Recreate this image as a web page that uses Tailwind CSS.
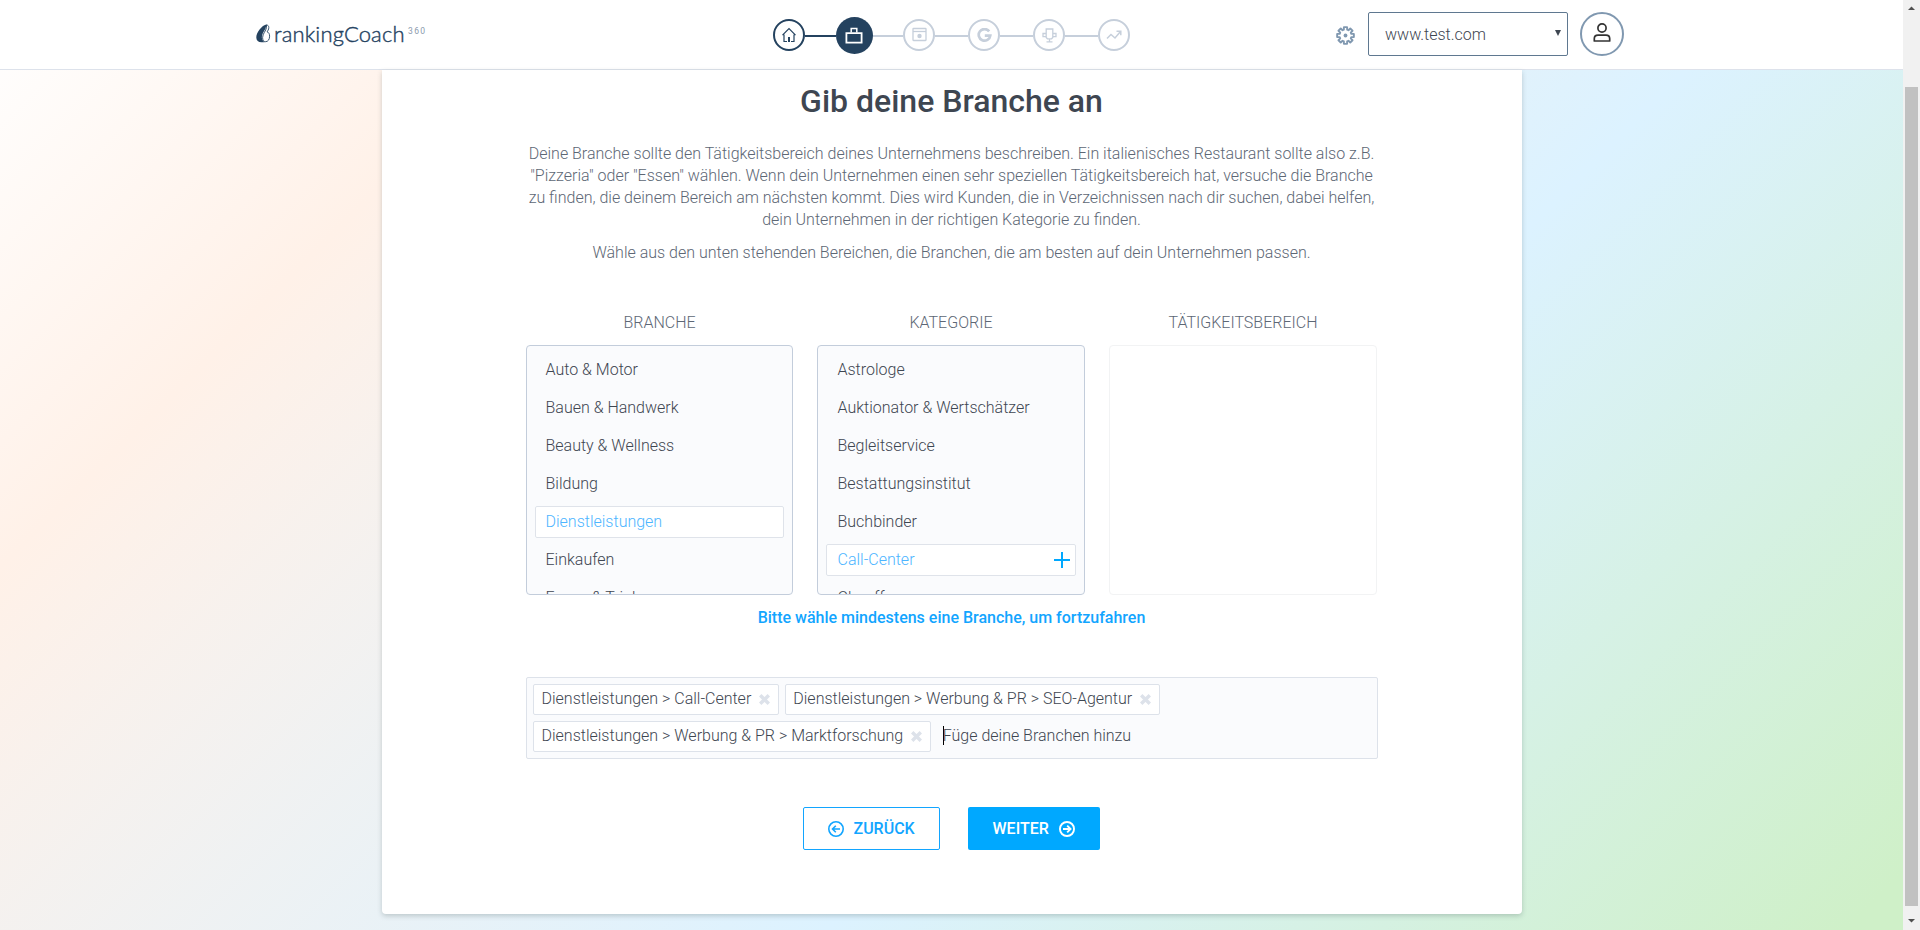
<!DOCTYPE html>
<html lang="de">
<head>
<meta charset="utf-8">
<title>rankingCoach 360</title>
<script src="https://cdn.jsdelivr.net/npm/@tailwindcss/browser@4"></script>
</head>
<body class="flex h-[930px] w-[1920px] overflow-hidden bg-white font-['Roboto',sans-serif] font-light text-[#3e4651]">
<div class="relative flex h-[930px] w-[1903px] flex-col bg-[linear-gradient(135deg,#ffffff_0%,#fff1e8_20%,#dcf2ff_62%,#cff0c8_98%)]">

  <header class="flex h-[70px] shrink-0 items-start border-b border-[#dde2eb] bg-white pl-[256px]">
    <!-- Logo -->
    <div class="mt-[19px] flex h-8 w-[517px] items-start text-[#24425f]">
      <svg class="mt-[5px] h-[19px] w-[15px] shrink-0" viewBox="0 0 15 19">
        <path fill="#24425f" d="M11 .3C5.500 1.500.3 8.500.3 13.500c0 3 2 4.700 5.200 4.700h3.300C6.300 16.800 5.500 14.500 6 11.800 6.700 8 9.800 5.500 10 2.500c0-.8.5-1.500 1-2.200z"/>
        <path fill="none" stroke="#24425f" stroke-width=".9" d="M10.500 1c1.400 0 2.300 1 2.300 2.600 0 2-1 3-1.700 4.200 1.600.6 2.500 2 2.500 4.400 0 3.200-1.600 5.500-4 5.500-2 0-3-1.700-3-4C6.600 9.500 10 7 10.500 3.500z"/>
      </svg>
      <span class="ml-[3px] w-[131px] font-['Lato',sans-serif] text-[22px] leading-[30px] font-light tracking-[0.15px] [-webkit-text-stroke:0.4px_#24425f]">rankingCoach</span>
      <span class="ml-[3px] mt-[7px] text-[8.500px] leading-[10px] font-normal tracking-[1.400px] text-[#8b9aad]">360</span>
    </div>
    <!-- Progress steps -->
    <div class="mt-[16.5px] flex h-[37px] w-[563px] items-center">
      <div class="flex size-8 items-center justify-center rounded-full border-2 border-[#24425f]">
        <svg class="size-[16px]" viewBox="0 0 16 16" fill="none" stroke="#24425f" stroke-width="1.200"><path d="M1.500 8.200 8 1.700l6.500 6.500M3 7.500v7h3M13 7.500v7h-3"/><path fill="#24425f" stroke="none" d="M7 10h2v5H7z"/></svg>
      </div>
      <div class="mt-[2px] h-[2px] w-[31px] bg-[#24425f]"></div>
      <div class="flex size-[37px] items-center justify-center rounded-full bg-[#24425f]">
        <svg class="mr-px h-[17px] w-[18px]" viewBox="0 0 18 17" fill="none" stroke="#fff"><path stroke-width="1.800" d="M1.400 6.200h15.200v9.400H1.400z"/><path stroke-width="1.500" d="M6.200 5.500v-4h5.600v4"/></svg>
      </div>
      <div class="mt-[2px] h-[2px] w-[30px] bg-[#c6cfdb]"></div>
      <div class="flex size-8 items-center justify-center rounded-full border-2 border-[#c6cfdb]">
        <svg class="mb-px size-[15px]" viewBox="0 0 15 15" fill="none" stroke="#c6cfdb" stroke-width="1.300"><rect x="1" y="1.500" width="13" height="12" rx=".5"/><path d="M1 4.500h13"/><circle cx="7.500" cy="9" r="2.200" fill="#c6cfdb" stroke="none"/></svg>
      </div>
      <div class="mt-[2px] h-[2px] w-[33px] bg-[#c6cfdb]"></div>
      <div class="flex size-8 items-center justify-center rounded-full border-2 border-[#c6cfdb]">
        <svg class="size-[15px]" viewBox="0 0 15 15" fill="none" stroke="#c6cfdb" stroke-width="2.700"><path d="M12.200 3.400A5.800 5.800 0 1 0 13.300 7.600H7.800"/></svg>
      </div>
      <div class="mt-[2px] h-[2px] w-[33px] bg-[#c6cfdb]"></div>
      <div class="flex size-8 items-center justify-center rounded-full border-2 border-[#c6cfdb]">
        <svg class="size-[15px]" viewBox="0 0 15 15" fill="none" stroke="#c6cfdb" stroke-width="1.300"><path d="M4.200 1h6.600v8.500L9.600 10.800H5.400L4.200 9.500zM4 5.500H1v3.200h3.200M11 5.500h3v3.200h-3.200M7.500 10.800v2.500M4.500 13.800h6"/></svg>
      </div>
      <div class="mt-[2px] h-[2px] w-[33px] bg-[#c6cfdb]"></div>
      <div class="flex size-8 items-center justify-center rounded-full border-2 border-[#c6cfdb]">
        <svg class="h-[10px] w-[16px]" viewBox="0 0 16 10" fill="none" stroke="#c6cfdb" stroke-width="1.500"><path d="M1 8.500 5 4.500l4 3.500L14.500 1.500M10.500 1.300h4.300v4"/></svg>
      </div>
    </div>
    <!-- Account controls -->
    <svg class="mt-[26px] size-[19px] shrink-0" viewBox="-9.500 -9.500 19 19" fill="none" stroke="#8098b0" stroke-width="1.900" stroke-linejoin="round"><path d="M-1.650-5.800-1.600-8.350 1.600-8.350 1.650-5.800 2.930-5.270 4.770-7.040 7.040-4.770 5.270-2.930 5.800-1.650 8.350-1.600 8.350 1.600 5.800 1.650 5.270 2.930 7.040 4.770 4.770 7.040 2.930 5.270 1.650 5.800 1.600 8.350-1.600 8.350-1.650 5.800-2.930 5.270-4.770 7.040-7.040 4.770-5.270 2.930-5.800 1.650-8.350 1.600-8.350-1.600-5.800-1.650-5.270-2.930-7.040-4.770-4.770-7.040-2.930-5.270z"/><circle r="1.900" fill="#8098b0" stroke="none"/></svg>
    <div class="mt-[12px] ml-[13px] flex h-11 w-[200px] items-center justify-between rounded-[2px] border border-[#5f7890] pr-[6px] pl-4 text-[16px]">
      <span class="pt-[2px]">www.test.com</span>
      <svg class="mb-[2px] h-[6px] w-[6px]" viewBox="0 0 6 6" fill="#3e4651"><path d="M0 0h6L3 6z"/></svg>
    </div>
    <div class="mt-[12px] ml-[12px] flex size-11 items-center justify-center rounded-full border-2 border-[#8098b0]">
      <svg class="mb-[3px] h-[19px] w-[18px]" viewBox="0 0 18 19" fill="none" stroke="#333" stroke-width="1.700"><circle cx="9" cy="5" r="4.100"/><path stroke-linejoin="round" d="M1.300 18v-2.200c0-2.400 1.500-3.600 3.700-3.600h8c2.200 0 3.700 1.200 3.700 3.600V18z"/></svg>
    </div>
  </header>

  <main class="ml-[382px] flex h-[844px] w-[1140px] flex-col items-center rounded-b-[4px] bg-white shadow-[0_2px_5px_rgba(60,80,80,0.25)]">
    <h1 class="mt-[11px] mr-px text-[32px] leading-[40px] font-medium">Gib deine Branche an</h1>
    <div class="mt-[22px] mr-px text-center text-[16px] leading-[22px] text-[#5d6775]">
      <p>Deine Branche sollte den Tätigkeitsbereich deines Unternehmens beschreiben. Ein italienisches Restaurant sollte also z.B.<br>"Pizzeria" oder "Essen" wählen. Wenn dein Unternehmen einen sehr speziellen Tätigkeitsbereich hat, versuche die Branche<br>zu finden, die deinem Bereich am nächsten kommt. Dies wird Kunden, die in Verzeichnissen nach dir suchen, dabei helfen,<br>dein Unternehmen in der richtigen Kategorie zu finden.</p>
      <p class="mt-[11px]">Wähle aus den unten stehenden Bereichen, die Branchen, die am besten auf dein Unternehmen passen.</p>
    </div>

    <div class="mt-[48px] mr-px grid w-[851px] grid-cols-[267px_268px_268px] gap-x-6 text-[16px]">
      <h2 class="mb-[11px] text-center leading-[22px] text-[#5d6775]">BRANCHE</h2>
      <h2 class="mb-[11px] text-center leading-[22px] text-[#5d6775]">KATEGORIE</h2>
      <h2 class="mb-[11px] text-center leading-[22px] text-[#5d6775]">TÄTIGKEITSBEREICH</h2>
      <ul class="flex h-[250px] flex-col gap-[6px] overflow-hidden rounded-[4px] border border-[#c3cddb] bg-[#fafbfd] p-2 leading-[30px] *:h-8 *:shrink-0 *:rounded-[2px] *:border *:border-transparent *:pl-[9.500px]">
        <li>Auto &amp; Motor</li>
        <li>Bauen &amp; Handwerk</li>
        <li>Beauty &amp; Wellness</li>
        <li>Bildung</li>
        <li class="border-[#dfe3ea]! bg-white text-[#4db5ff]">Dienstleistungen</li>
        <li>Einkaufen</li>
        <li>Essen &amp; Trinken</li>
      </ul>
      <ul class="flex h-[250px] flex-col gap-[6px] overflow-hidden rounded-[4px] border border-[#c3cddb] bg-[#fafbfd] p-2 leading-[30px] *:h-8 *:shrink-0 *:rounded-[2px] *:border *:border-transparent *:pl-[10.500px]">
        <li>Astrologe</li>
        <li>Auktionator &amp; Wertschätzer</li>
        <li>Begleitservice</li>
        <li>Bestattungsinstitut</li>
        <li>Buchbinder</li>
        <li class="flex items-center justify-between border-[#dfe3ea]! bg-white pr-[5px] text-[#4db5ff]"><span>Call-Center</span><svg class="size-4" viewBox="0 0 16 16" stroke="#00a8ff" stroke-width="2"><path d="M8 0v16M0 8h16"/></svg></li>
        <li>Chauffeur</li>
      </ul>
      <div class="h-[250px] rounded-[4px] border border-[#f2f3f4] bg-white"></div>
    </div>

    <p class="mt-[12px] mr-px text-[16px] leading-[22px] font-medium text-[#12a5ff]">Bitte wähle mindestens eine Branche, um fortzufahren</p>

    <div class="mt-[48px] flex h-[82px] w-[852px] flex-wrap content-start gap-[6px] rounded-[2px] border border-[#dde2ea] bg-[#fafbfd] p-[6px] text-[16px] leading-[28px]">
      <div class="flex h-[31px] items-center rounded-[2px] border border-[#dde2ea] bg-white pr-2 pb-px pl-[7.500px]">Dienstleistungen &gt; Call-Center<svg class="ml-[7.500px] size-[11px]" viewBox="0 0 11 11" stroke="#dde2ea" stroke-width="3.400"><path d="m1.200 1.200 8.600 8.600M9.800 1.200 1.200 9.800"/></svg></div>
      <div class="flex h-[31px] items-center rounded-[2px] border border-[#dde2ea] bg-white pr-2 pb-px pl-[7.500px]">Dienstleistungen &gt; Werbung &amp; PR &gt; SEO-Agentur<svg class="ml-[7.500px] size-[11px]" viewBox="0 0 11 11" stroke="#dde2ea" stroke-width="3.400"><path d="m1.200 1.200 8.600 8.600M9.800 1.200 1.200 9.800"/></svg></div>
      <div class="flex h-[31px] items-center rounded-[2px] border border-[#dde2ea] bg-white pr-2 pb-px pl-[7.500px]">Dienstleistungen &gt; Werbung &amp; PR &gt; Marktforschung<svg class="ml-[7.500px] size-[11px]" viewBox="0 0 11 11" stroke="#dde2ea" stroke-width="3.400"><path d="m1.200 1.200 8.600 8.600M9.800 1.200 1.200 9.800"/></svg></div>
      <div class="flex h-[31px] items-center pb-[2px] pl-[6px]"><i class="-mr-px h-[19px] w-px bg-black"></i><span>Füge deine Branchen hinzu</span></div>
    </div>

    <div class="mt-[48px] mr-[2px] flex gap-7 text-[16px] font-medium">
      <button class="flex h-[43px] w-[137px] items-center rounded-[2px] border border-[#12a5ff] pl-[24px] text-[#12a5ff]"><svg class="mr-[10px] size-4" viewBox="0 0 16 16" fill="none" stroke="currentColor" stroke-width="1.600"><circle cx="8" cy="8" r="7.200"/><path d="M12 8H4.700M7.800 4.700 4.500 8l3.300 3.300"/></svg>ZURÜCK</button>
      <button class="flex h-[43px] w-[132px] items-center rounded-[2px] bg-[#00a8ff] pl-[25px] text-white">WEITER<svg class="ml-[10px] size-4" viewBox="0 0 16 16" fill="none" stroke="currentColor" stroke-width="1.900"><circle cx="8" cy="8" r="7.050"/><path d="M4 8h7.300M8.200 4.700 11.500 8l-3.300 3.300"/></svg></button>
    </div>
  </main>
</div>

<!-- Page scrollbar -->
<div class="flex h-[930px] w-[17px] flex-col items-center bg-[#f1f1f1]">
  <svg class="h-[17px] w-[17px]" viewBox="0 0 17 17" fill="#505050"><path d="M5 10h7L8.500 6.500z"/></svg>
  <div class="mt-[70px] h-[819px] w-[13px] bg-[#c1c1c1]"></div>
  <svg class="mt-[7px] h-[17px] w-[17px]" viewBox="0 0 17 17" fill="#505050"><path d="M5 6h7L8.500 9.500z"/></svg>
</div>
</body>
</html>
